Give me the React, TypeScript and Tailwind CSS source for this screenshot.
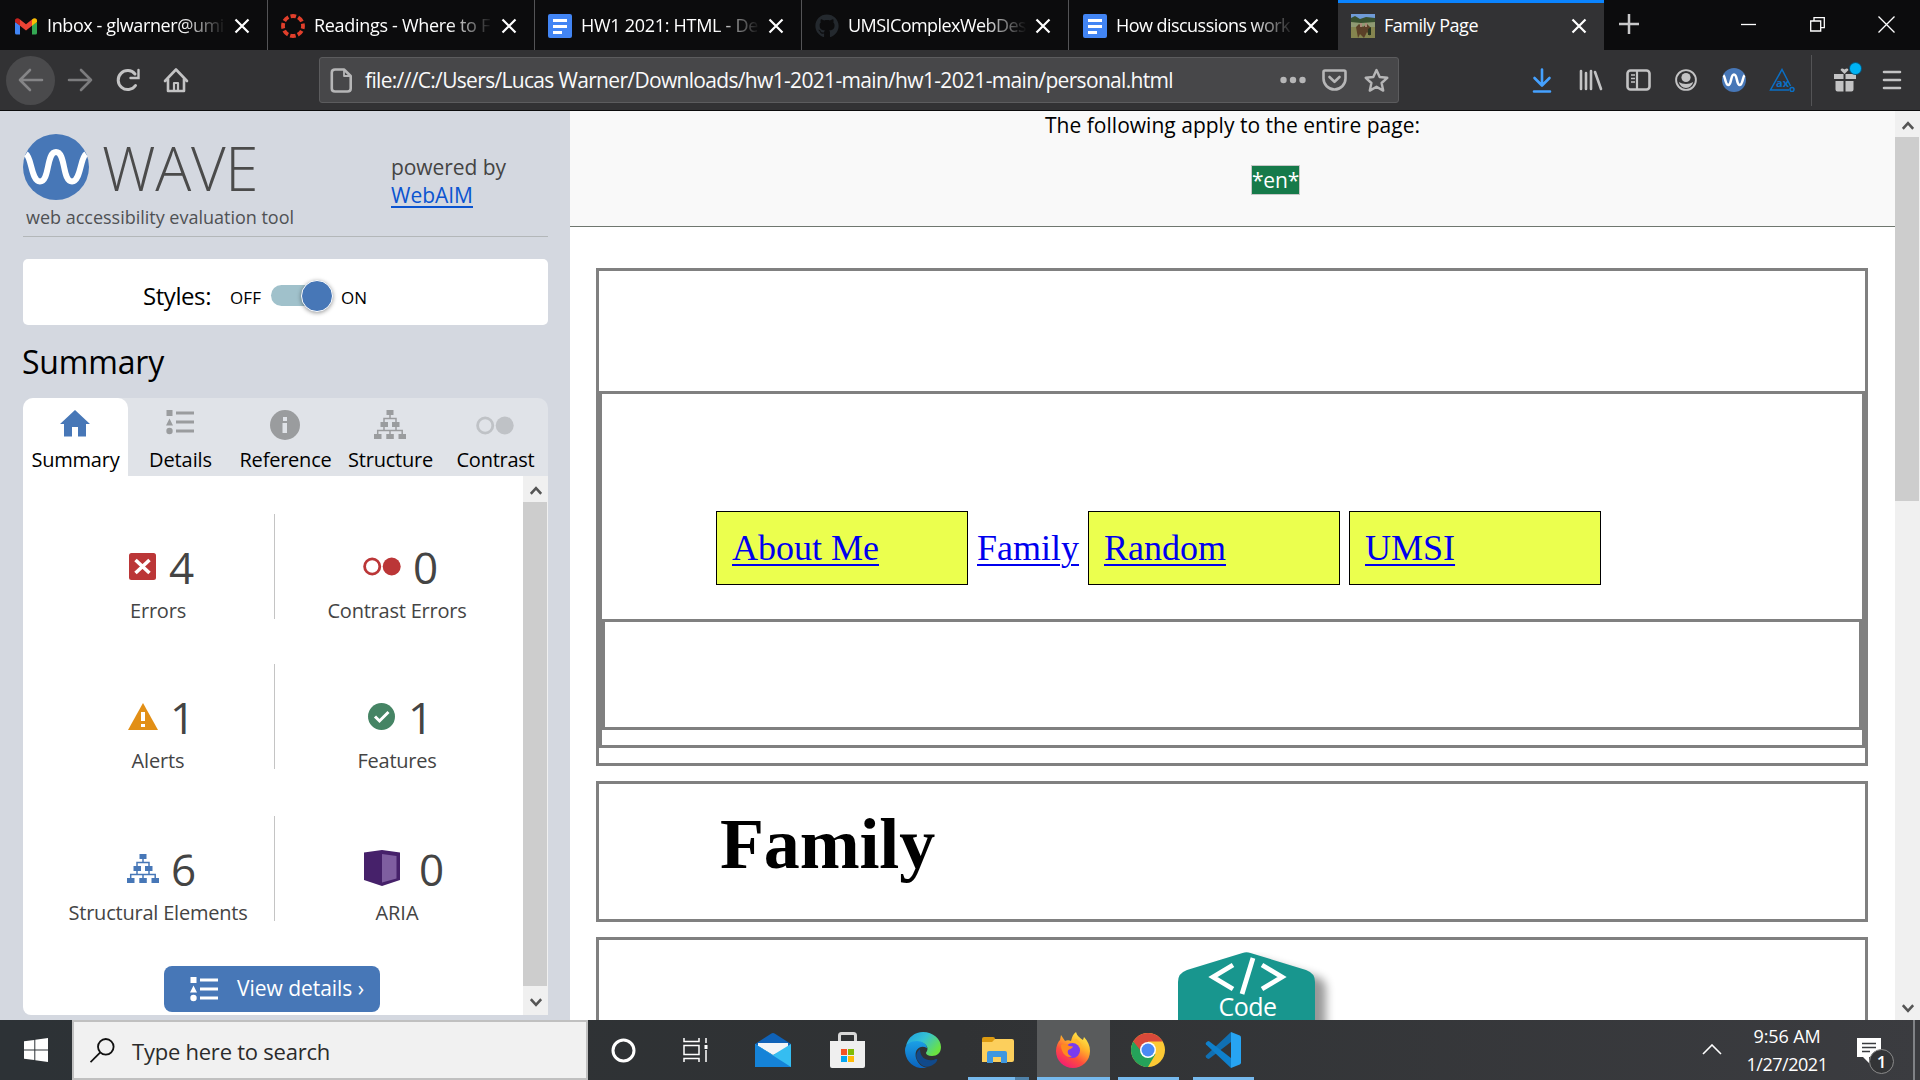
import { useLayoutEffect, useRef, useState } from "react";
import type { ReactNode } from "react";
import { FaGithub } from "react-icons/fa";

/** Text tracked so that it spans exactly `w` pixels. */
function Fit({ w, children, className = "" }: { w: number; children: string; className?: string }) {
  const ref = useRef<HTMLSpanElement>(null);
  const [spacing, setSpacing] = useState(0);
  useLayoutEffect(() => {
    if (ref.current) {
      const natural = ref.current.getBoundingClientRect().width;
      setSpacing((w - natural) / children.length);
    }
  }, [w, children]);
  return (
    <span ref={ref} className={`inline-block whitespace-pre ${className}`} style={{ letterSpacing: `${spacing}px` }}>
      {children}
    </span>
  );
}

const DocsIcon = () => (
  <svg width="24" height="24" viewBox="0 0 24 24">
    <rect width="24" height="24" rx="2" fill="#4285f4" />
    <path d="M5 5h14v3H5zM5 11h14v3H5zM5 17h9v3H5z" fill="#fff" />
  </svg>
);

const GmailIcon = () => (
  <svg width="24" height="24" viewBox="0 0 24 24">
    <path d="M1 8v11q0 1.500 1.500 1.500H6V11z" fill="#4285f4" />
    <path d="M23 8v11q0 1.500-1.500 1.500H18V11z" fill="#34a853" />
    <path d="M6 5.500l6 4.800 6-4.800v6.300L12 16.500 6 11.800z" fill="#ea4335" />
    <path d="M1 6.500C1 4 3.800 3.200 6 5.500v6.300L1 8z" fill="#c5221f" />
    <path d="M23 6.500C23 4 20.200 3.200 18 5.500v6.300L23 8z" fill="#fbbc04" />
  </svg>
);

const CanvasIcon = () => (
  <svg width="24" height="24" viewBox="0 0 24 24" fill="none">
    <circle cx="12" cy="12" r="10" stroke="#e13f2b" strokeWidth="3.800" strokeDasharray="5.600 2.254" strokeDashoffset="2.800" />
  </svg>
);

const PhotoIcon = () => (
  <svg width="24" height="24" viewBox="0 0 24 24">
    <rect width="24" height="24" fill="#85854f" />
    <rect width="24" height="5" fill="#6f9bd6" />
    <path d="M0 4l4-2 5 3 6-2 9 1v6H0z" fill="#38502f" />
    <path d="M0 8l10 1 14-1v5H0z" fill="#8f9a72" />
    <path d="M5 13l3-3 4 3 4-3 4 4-1 8-3-4-3 6-4-4-2 4z" fill="#5b4028" />
    <path d="M9 9h2v4H9zM14 9h2v4h-2z" fill="#a98a78" />
    <path d="M17 15l3-2v8h-3z" fill="#28351f" />
  </svg>
);

const CloseIcon = () => (
  <svg width="16" height="16" viewBox="0 0 16 16" stroke="#fff" strokeWidth="2.200">
    <path d="M1.500 1.500l13 13M14.500 1.500l-13 13" />
  </svg>
);

const tabs: { title: string; w: number; icon: ReactNode; active?: boolean }[] = [
  { title: "Inbox - glwarner@umi", w: 177, icon: <GmailIcon /> },
  { title: "Readings - Where to F", w: 176, icon: <CanvasIcon /> },
  { title: "HW1 2021: HTML - De", w: 177, icon: <DocsIcon /> },
  { title: "UMSIComplexWebDes", w: 178, icon: <FaGithub size={24} color="#24292e" /> },
  { title: "How discussions work", w: 174, icon: <DocsIcon /> },
  { title: "Family Page", w: 94, icon: <PhotoIcon />, active: true },
];

function TabStrip() {
  return (
    <div className="flex h-[50px] bg-[#0c0c0d] text-white">
      {tabs.map((t, i) => (
        <div
          key={t.title}
          className={
            t.active
              ? "flex w-[266px] border-t-[3px] border-[#0a84ff] bg-[#323234] pl-[13px]"
              : i === 4
                ? "flex w-[269px] pl-[14px]"
                : i === 0
                  ? "flex w-[268px] border-r border-[#545456] pl-[14px]"
                  : "flex w-[267px] border-r border-[#545456] pl-[13px]"
          }
        >
          <div className={t.active ? "mt-[11px] h-6 w-6" : "mt-[14px] h-6 w-6"}>{t.icon}</div>
          <div
            className={
              t.active
                ? "mt-2 ml-[9px] h-7 w-[179px] overflow-hidden text-[18px] leading-7"
                : "mt-[11px] ml-[9px] h-7 w-[179px] overflow-hidden text-[18px] leading-7 [mask-image:linear-gradient(to_right,#000_75%,transparent)]"
            }
          >
            <Fit w={t.w}>{t.title}</Fit>
          </div>
          <div className={t.active ? "mt-[15px] ml-2" : "mt-[18px] ml-2"}>
            <CloseIcon />
          </div>
        </div>
      ))}
      <svg className="mt-[13px] ml-[14px]" width="22" height="22" viewBox="0 0 22 22" stroke="#c8c8c9" strokeWidth="2.500">
        <path d="M11 1v20M1 11h20" />
      </svg>
      <div className="mr-[25px] ml-auto flex items-center gap-[53px] pb-0.5">
        <svg width="16" height="16" viewBox="0 0 16 16" stroke="#fff" strokeWidth="1.300">
          <path d="M0 8.500h15" />
        </svg>
        <svg width="15" height="15" viewBox="0 0 15 15" stroke="#fff" strokeWidth="1.300" fill="none">
          <path d="M.7 4h10v10H.7zM4 4V.7h10.300v10H11" />
        </svg>
        <svg width="17" height="17" viewBox="0 0 17 17" stroke="#fff" strokeWidth="1.300">
          <path d="M.5.5l16 16M16.500.5l-16 16" />
        </svg>
      </div>
    </div>
  );
}

function Toolbar() {
  return (
    <div className="flex h-[61px] items-center border-b border-[#0c0c0d] bg-[#323234] text-[#c3c3c4]">
      <div className="ml-[6px] flex h-[49px] w-[49px] items-center justify-center rounded-full bg-[#4a4a4c]">
        <svg width="26" height="24" viewBox="0 0 26 24" fill="none" stroke="#858587" strokeWidth="2.600" strokeLinecap="round" strokeLinejoin="round">
          <path d="M24 12H2M12 2L2 12l10 10" />
        </svg>
      </div>
      <svg className="ml-3" width="26" height="24" viewBox="0 0 26 24" fill="none" stroke="#7c7c7e" strokeWidth="2.600" strokeLinecap="round" strokeLinejoin="round">
        <path d="M2 12h22M14 2l10 10-10 10" />
      </svg>
      <svg className="ml-[23px]" width="24" height="24" viewBox="0 0 24 24" fill="none" stroke="currentColor" strokeWidth="3" strokeLinecap="round">
        <path d="M19.500 17.500A9.500 9.500 0 1 1 19 6" />
        <path d="M22.500 2v8h-8" strokeWidth="2.400" />
      </svg>
      <svg className="ml-[23px]" width="26" height="26" viewBox="0 0 26 26" fill="none" stroke="currentColor" strokeWidth="2.600" strokeLinejoin="round" strokeLinecap="round">
        <path d="M2 14L13 2.500 24 14M5 12v12h16V12" />
        <path d="M11 24v-8h4v8" strokeWidth="2.200" />
      </svg>
      <div className="ml-[130px] flex h-[46px] w-[1080px] items-center rounded-[3px] border border-[#5c5c5e] bg-[#474749] text-[#b6b6b7]">
        <svg className="ml-[10px]" width="23" height="25" viewBox="0 0 23 25" fill="none" stroke="currentColor" strokeWidth="2.600" strokeLinejoin="round">
          <path d="M14 1.500H5Q1.800 1.500 1.800 4.500v16q0 3 3.200 3h12.500q3.200 0 3.200-3V8z" />
          <path d="M14 1.500V8h6.500" strokeWidth="1.800" />
        </svg>
        <div className="ml-[12px] pb-px text-[21px] leading-8 text-[#f9f9fa]">
          <Fit w={808}>file:///C:/Users/Lucas Warner/Downloads/hw1-2021-main/hw1-2021-main/personal.html</Fit>
        </div>
        <svg className="ml-[107px]" width="26" height="8" fill="currentColor">
          <circle cx="3.500" cy="4" r="3.200" />
          <circle cx="13" cy="4" r="3.200" />
          <circle cx="22.500" cy="4" r="3.200" />
        </svg>
        <svg className="ml-[16px]" width="25" height="22" viewBox="0 0 25 22" fill="none" stroke="currentColor" strokeWidth="2.600" strokeLinecap="round" strokeLinejoin="round">
          <path d="M3 1.500h19q1.500 0 1.500 1.500v6.500a11 11 0 0 1-22 0V3Q1.500 1.500 3 1.500z" />
          <path d="M7.500 8l5 4.800 5-4.800" />
        </svg>
        <svg className="ml-[17px]" width="25" height="25" viewBox="0 0 25 25" fill="none" stroke="currentColor" strokeWidth="2.400" strokeLinejoin="round">
          <path d="M12.500 2l3.200 7 7.600.8-5.700 5.200 1.600 7.600-6.700-3.900-6.700 3.900 1.600-7.600L1.700 9.800l7.600-.8z" />
        </svg>
      </div>
      <svg className="ml-[133px]" width="20" height="25" viewBox="0 0 20 25" fill="none" stroke="#45a1ff" strokeWidth="2.600" strokeLinecap="round" strokeLinejoin="round">
        <path d="M10 1.500V17M2.500 10l7.500 7.500 7.500-7.500M2 23.500h16" />
      </svg>
      <svg className="ml-[27px]" width="24" height="22" viewBox="0 0 24 22" fill="none" stroke="currentColor" strokeWidth="2.600" strokeLinecap="round">
        <path d="M2 2v18M7 4v16M12 2v18M16 3l6 17" />
      </svg>
      <svg className="ml-[23px]" width="25" height="22" viewBox="0 0 25 22" fill="none" stroke="currentColor" strokeWidth="2.600">
        <rect x="1.500" y="1.500" width="22" height="19" rx="3" />
        <path d="M11 2v18" strokeWidth="2.200" />
        <path d="M5 6h4M5 9.500h4M5 13h4" strokeWidth="1.600" />
      </svg>
      <svg className="ml-[24px]" width="22" height="22" viewBox="0 0 22 22">
        <circle cx="11" cy="11" r="9.900" fill="none" stroke="currentColor" strokeWidth="1.900" />
        <circle cx="11" cy="8.500" r="4.600" fill="currentColor" />
        <path d="M3.800 13q3 2 7.200 2t7.200-2q-1.500 5.500-7.200 6-5.700-.5-7.200-6z" fill="currentColor" />
      </svg>
      <svg className="ml-[25px]" width="24" height="24" viewBox="0 0 66 66">
        <circle cx="33" cy="33" r="33" fill="#4777b7" />
        <path d="M4 20C9 24 9 46 17 47c10 0 6-29 16-29s6 29 16 29c8-1 8-23 13-27" fill="none" stroke="#fff" strokeWidth="7" />
      </svg>
      <svg className="ml-[23px] text-[11px] font-bold" width="26" height="24" viewBox="0 0 26 24" fill="none" stroke="#0b6fc4" strokeWidth="1.500">
        <path d="M20 22H1.500L13 1.500 21.500 18" />
        <circle cx="23" cy="21.500" r="2" />
        <text x="7" y="19" fill="#0b6fc4" stroke="none">ax</text>
      </svg>
      <div className="ml-[16px] h-[51px] w-px bg-[#545456]" />
      <div className="relative ml-[21px] h-6 w-6">
        <svg width="24" height="24" viewBox="0 0 24 24" fill="currentColor">
          <path d="M1 6h9.500v5H1zM12.500 6H23v5H12.500zM2.500 13h8v10.500h-6q-2 0-2-2zM12.500 13h8v8.500q0 2-2 2h-6zM11.500 6L7.500 2q1-2.500 4-.5 3-2 4 .5z" />
        </svg>
        <div className="absolute -top-[5px] left-[17px] h-[11px] w-[11px] rounded-full bg-[#00b3f4] ring-1 ring-[#075a80]" />
      </div>
      <svg className="ml-[25px]" width="20" height="20" viewBox="0 0 20 20" stroke="currentColor" strokeWidth="2.600" strokeLinecap="round">
        <path d="M2 2h16M2 10h16M2 18h16" />
      </svg>
    </div>
  );
}

const ListIcon = ({ color }: { color: string }) => (
  <svg width="28" height="25" viewBox="0 0 28 25" fill={color}>
    <path d="M.5 0h6v6h-6zM3.500 8.500l3.500 7H0zM10 1.500h18v3H10zM10 10.500h18v3H10zM10 19.500h18v3H10z" />
    <circle cx="3.500" cy="21" r="3.200" />
  </svg>
);

const TreeIcon = ({ color }: { color: string }) => (
  <svg width="32" height="29" viewBox="0 0 32 29">
    <path d="M12.500 0h7v5h-7zM6.500 12h7.500v5H6.500zM18 12h7.500v5H18zM0 24h7.500v5H0zM12.300 24h7.500v5h-7.500zM24.500 24H32v5h-7.500z" fill={color} />
    <path d="M16 5v3.500M10 12V8.500h12V12M10 17v3.500M22 17v3.500M3.700 24v-3.500h24.500V24M16 20.500V24" fill="none" stroke={color} strokeWidth="1.500" />
  </svg>
);

const ContrastIcon = ({ color }: { color: string }) => (
  <svg width="38" height="19" viewBox="0 0 38 19">
    <circle cx="9.200" cy="9.500" r="7.600" fill="none" stroke={color} strokeWidth="2.800" />
    <circle cx="28.700" cy="9.500" r="9" fill={color} />
  </svg>
);

const sideTabs: { label: string; w: number; icon: ReactNode }[] = [
  {
    label: "Summary",
    w: 88,
    icon: (
      <svg width="30" height="27" viewBox="0 0 30 27" fill="#4777b7">
        <path d="M15 0l15 14h-4v12.500h-8V17h-6v9.500H4V14H0z" />
      </svg>
    ),
  },
  { label: "Details", w: 63, icon: <ListIcon color="#9a9c9e" /> },
  {
    label: "Reference",
    w: 92,
    icon: (
      <svg width="30" height="30" viewBox="0 0 30 30">
        <circle cx="15" cy="15" r="15" fill="#9a9c9e" />
        <path d="M13 7h4v4h-4zM12.500 13H17v10h-4.500z" fill="#e0e3e8" />
      </svg>
    ),
  },
  { label: "Structure", w: 85, icon: <TreeIcon color="#9a9c9e" /> },
  {
    label: "Contrast",
    w: 78,
    icon: (
      <div className="pt-[6px]">
        <ContrastIcon color="#bfc2c6" />
      </div>
    ),
  },
];

const stats: { pad: string; gap: string; icon: ReactNode; n: string; label: string; w: number }[][] = [
  [
    {
      pad: "pl-[106px]",
      gap: "gap-[13px]",
      icon: (
        <svg width="27" height="27" viewBox="0 0 27 27">
          <rect width="27" height="27" rx="2.500" fill="#bb3637" />
          <path d="M6.500 7l14 13M20.500 7l-14 13" stroke="#fff" strokeWidth="3.600" />
        </svg>
      ),
      n: "4",
      label: "Errors",
      w: 56,
    },
    { pad: "pl-[88px]", gap: "gap-3", icon: <ContrastIcon color="#bb3637" />, n: "0", label: "Contrast Errors", w: 139 },
  ],
  [
    {
      pad: "pl-[105px]",
      gap: "gap-[12px]",
      icon: (
        <svg width="30" height="27" viewBox="0 0 30 27">
          <path d="M15 0l15 27H0z" fill="#e28f16" />
          <path d="M13 9h4v9h-4zM13 21h4v3h-4z" fill="#fff" />
        </svg>
      ),
      n: "1",
      label: "Alerts",
      w: 53,
    },
    {
      pad: "pl-[93px]",
      gap: "gap-[13px]",
      icon: (
        <svg width="27" height="27" viewBox="0 0 27 27">
          <circle cx="13.500" cy="13.500" r="13.500" fill="#458464" />
          <path d="M7 13.500l4.500 4.500 9-9" fill="none" stroke="#fff" strokeWidth="3" />
        </svg>
      ),
      n: "1",
      label: "Features",
      w: 79,
    },
  ],
  [
    { pad: "pl-[104px]", gap: "gap-3", icon: <TreeIcon color="#4777b7" />, n: "6", label: "Structural Elements", w: 179 },
    {
      pad: "pl-[89px]",
      gap: "gap-[19px]",
      icon: (
        <svg width="36" height="36" viewBox="0 0 36 36">
          <path d="M0 2.500L18 0l18 2.500v27.500L18 36 0 30z" fill="#46216a" />
          <path d="M18 4l14.500 2v22.500L18 32.500z" fill="#7f5ea0" />
        </svg>
      ),
      n: "0",
      label: "ARIA",
      w: 43,
    },
  ],
];

const Chevron = ({ down = false }: { down?: boolean }) => (
  <svg className={down ? "rotate-180" : ""} width="12" height="9" viewBox="0 0 12 9" fill="none" stroke="#555" strokeWidth="2.600">
    <path d="M.8 7.800L6 2.200l5.200 5.600" />
  </svg>
);

function Sidebar() {
  return (
    <div className="flex w-[570px] flex-col bg-[#d4d8e0] px-[23px] pr-[22px] pt-[23px]">
      <div className="flex h-[103px] justify-between border-b border-[#b3b7b9]">
        <div>
          <div className="flex h-[66px]">
            <svg width="66" height="66" viewBox="0 0 66 66">
              <circle cx="33" cy="33" r="33" fill="#4777b7" />
              <path d="M3 20C9 24 8 47 17 47.500c10 0 6-29.500 16-29.500s6 29.500 16 29.500c9-.5 8-23.500 14-27.500" fill="none" stroke="#fff" strokeWidth="6" />
            </svg>
            <div className="mt-px ml-[13px] text-[60px] leading-[66px] font-light text-[#4b4b4b]">
              <Fit w={156}>WAVE</Fit>
            </div>
          </div>
          <div className="mt-[5px] ml-[3px] text-[18px] leading-6 text-[#4f5154]">
            <Fit w={268}>web accessibility evaluation tool</Fit>
          </div>
        </div>
        <div className="mr-[41px] flex w-[116px] flex-col items-start pt-[19px] text-[21px] leading-7 text-[#444]">
          <Fit w={115}>powered by</Fit>
          <Fit w={82} className="text-[#0b54d0] underline decoration-2 underline-offset-3">
            WebAIM
          </Fit>
        </div>
      </div>
      <div className="mt-[22px] flex h-[66px] items-center rounded-[5px] bg-white pt-[7px] pl-[120px] text-[17px] text-black">
        <Fit w={68} className="text-[24px]">
          Styles:
        </Fit>
        <Fit w={31} className="ml-[19px] pt-1">
          OFF
        </Fit>
        <div className="relative ml-[10px] h-[21px] w-[60px] rounded-full bg-[#a0c1cb]">
          <div className="absolute -top-[5px] left-[30px] h-[32px] w-[32px] rounded-full border border-white bg-[#4777b7] shadow-[0_1px_4px_rgba(0,0,0,0.4)]" />
        </div>
        <Fit w={26} className="ml-[10px] pt-1">
          ON
        </Fit>
      </div>
      <div className="mt-[17px] -ml-px text-[32px] leading-10 text-black">
        <Fit w={142}>Summary</Fit>
      </div>
      <div className="mt-4 flex h-[78px] rounded-t-[10px] bg-[#e0e3e8] text-[20px] leading-6 text-black">
        {sideTabs.map((t, i) => (
          <div
            key={t.label}
            className={
              i === 0
                ? "flex flex-1 flex-col items-center rounded-t-[10px] bg-white pt-3"
                : "flex flex-1 flex-col items-center pt-3"
            }
          >
            <div className="mb-2 h-[30px] pr-0.5">{t.icon}</div>
            <Fit w={t.w}>{t.label}</Fit>
          </div>
        ))}
      </div>
      <div className="flex h-[539px] overflow-hidden rounded-bl-[8px] bg-white text-[#444]">
        <div className="w-[500px] pt-[38px]">
          {stats.map((row, i) => (
            <div key={i} className={i === 0 ? "flex h-[105px]" : i === 1 ? "mt-[45px] flex h-[105px]" : "mt-[47px] flex h-[105px]"}>
              {row.map((s, j) => (
                <div key={s.label} className={j === 0 ? "w-[252px] border-r border-[#c4c4c4] pt-8" : "w-[248px] pt-8"}>
                  <div className={`flex h-10 items-center ${s.pad} ${s.gap}`}>
                    {s.icon}
                    <span className="pt-0.5 text-[44px] leading-10">{s.n}</span>
                  </div>
                  <div className={j === 0 ? "mt-[13px] pl-[19px] text-center text-[20px] leading-6" : "mt-[13px] pr-[4px] text-center text-[20px] leading-6"}>
                    <Fit w={s.w}>{s.label}</Fit>
                  </div>
                </div>
              ))}
            </div>
          ))}
          <div className="mt-[45px] ml-[141px] flex h-[46px] w-[216px] items-center rounded-[8px] bg-[#4777b7] pl-[26px] text-[21px] text-white">
            <ListIcon color="#fff" />
            <Fit w={127} className="ml-[19px]">
              View details ›
            </Fit>
          </div>
        </div>
        <div className="flex w-[25px] flex-col bg-[#f0f0f0]">
          <div className="flex h-[28px] shrink-0 items-center justify-center">
            <Chevron />
          </div>
          <div className="-mt-0.5 mr-px h-[484px] shrink-0 bg-[#cdcdcd]" />
          <div className="flex flex-1 items-center justify-center pt-1">
            <Chevron down />
          </div>
        </div>
      </div>
    </div>
  );
}

function PageView() {
  const cell = "h-[74px] w-[252px] border border-black bg-[#ebff4e] pl-[15px] pt-[14px]";
  const link = "text-[#0000ee] underline decoration-2 underline-offset-4";
  return (
    <div className="flex w-[1325px] flex-col overflow-hidden bg-white">
      <div className="flex h-[116px] shrink-0 flex-col border-b border-[#6f776f] bg-[#f9f9f9] text-[21px] text-black">
        <div className="h-7 pl-[475px] leading-7">
          <Fit w={375}>The following apply to the entire page:</Fit>
        </div>
        <div className="mt-[26px] ml-[681px] flex h-[30px] w-[49px] items-center justify-center border border-[#c8c8c8] bg-[#167a4a] pt-0.5 text-white">
          <Fit w={47}>*en*</Fit>
        </div>
      </div>
      <div className="mt-[41px] mr-[27px] ml-[26px] flex shrink-0 flex-col gap-[15px] font-['Liberation_Serif',serif]">
        <div className="h-[498px] border-[3px] border-[#808080] pt-[120px]">
          <div className="h-[357px] border-[3px] border-[#808080] pt-[117px]">
            <div className="ml-[114px] flex h-[108px] text-[36px] leading-[44px]">
              <div className={cell}>
                <span className={link}>About Me</span>
              </div>
              <div className="w-[120px] pt-[15px] pl-[9px]">
                <span className={link}>Family</span>
              </div>
              <div className={cell}>
                <span className={link}>Random</span>
              </div>
              <div className="w-[9px]" />
              <div className={cell}>
                <span className={link}>UMSI</span>
              </div>
            </div>
            <div className="h-[111px] border-[3px] border-[#808080]" />
          </div>
        </div>
        <div className="h-[141px] border-[3px] border-[#808080] pt-[20px] pl-[121px] text-[72px] leading-[80px] font-bold text-black">
          <Fit w={215}>Family</Fit>
        </div>
        <div className="flex h-[180px] justify-center border-[3px] border-[#808080] pt-3">
          <div className="relative ml-[51px] h-[150px] w-[160px]">
            <svg className="absolute inset-0" width="160" height="150" viewBox="0 0 160 150">
              <defs>
                <filter id="soft" x="-20%" y="-20%" width="150%" height="140%">
                  <feGaussianBlur stdDeviation="5" />
                </filter>
              </defs>
              <path d="M12 26L73 8q4-1 8 0l61 18q6 3 6 12v112H12z" fill="#000" opacity=".4" filter="url(#soft)" />
              <path d="M0 30q0-9 9-12L64.500 1q4-1.500 8 0L128 18q9 3 9 12v120H0z" fill="#18968e" />
              <path d="M55 13L35 25l20 12M84 13l20 12-20 12M75 6L64 42" fill="none" stroke="#fff" strokeWidth="4.800" />
            </svg>
            <div className="absolute top-[40px] left-[41px] h-7 font-['Open_Sans',sans-serif] text-[25px] leading-7 text-white">
              <Fit w={58}>Code</Fit>
            </div>
          </div>
        </div>
      </div>
    </div>
  );
}

const EdgeIcon = () => (
  <svg width="36" height="36" viewBox="0 0 36 36">
    <defs>
      <linearGradient id="eg" x1="0" y1="0" x2="1" y2=".6">
        <stop offset="0" stopColor="#1c9de0" />
        <stop offset=".5" stopColor="#35c1d4" />
        <stop offset="1" stopColor="#6be340" />
      </linearGradient>
      <linearGradient id="eb" x1="0" y1="0" x2="0" y2="1">
        <stop offset="0" stopColor="#1ba0e6" />
        <stop offset="1" stopColor="#0a62bd" />
      </linearGradient>
    </defs>
    <path d="M1 14C3 5 10 0 18 0c10 0 18 7 18 15 0 6-4 9-9 9-4 0-6-1.500-6-3 0-1 1.500-2 1.500-4C22.500 13 18 10 13 10 7 10 3 12 1 14z" fill="url(#eg)" />
    <path d="M0 18c0-6 6-9 12-9 5 0 10 3 10 7-8-4-13 3-11 10 2 6 6 9 11 10C9 38 0 29 0 18z" fill="url(#eb)" />
    <path d="M15 17c-4 3-5 8-2 12 4 5 12 6 18 0 1-1 1-2 0-2-6 3-16 1-16-10z" fill="#114a8b" />
    <path d="M13 28c3 7 10 9 16 4 2-1 4-4 3-5-6 3-14 3-19 1z" fill="#114a8b" />
  </svg>
);

const FirefoxIcon = () => (
  <svg width="36" height="36" viewBox="0 0 36 36">
    <defs>
      <linearGradient id="ff" x1=".8" y1="0" x2=".2" y2="1">
        <stop offset="0" stopColor="#fff44f" />
        <stop offset=".35" stopColor="#ffb02a" />
        <stop offset=".65" stopColor="#ff4f3c" />
        <stop offset="1" stopColor="#f0147d" />
      </linearGradient>
    </defs>
    <path d="M21 0c1 4 4 6 7 8l1-3c4 4 6 9 6 14 0 10-8 17-17 17S1 29 1 19C1 14 3 10 5 8l1-5 4 6c2-1 4-1 6 0 1-4 2-7 5-9z" fill="url(#ff)" />
    <circle cx="17.500" cy="18.500" r="7.500" fill="#7a3bf0" />
    <path d="M17 10c5-1 10 3 9 9 2-6-1-10-5-12z" fill="#ffb52e" />
    <path d="M6 13c3-2 6-1 8 1l4 .5c-1 3-4 2-5 4-1 3 1 5 4 6-6 2-11-4-11-11.500z" fill="#ff8a1f" />
  </svg>
);

const ChromeIcon = () => (
  <svg width="34" height="34" viewBox="0 0 34 34">
    <circle cx="17" cy="17" r="17" fill="#fcc934" />
    <path d="M17 17L2.300 8.500A17 17 0 0 0 17 34l7.400-12.800z" fill="#25a25a" />
    <path d="M17 17H9.200L2.300 8.500A17 17 0 0 1 31.700 8.500H17z" fill="#d9493a" />
    <circle cx="17" cy="17" r="8" fill="#fff" />
    <circle cx="17" cy="17" r="6.500" fill="#4a8af4" />
  </svg>
);

function Taskbar() {
  return (
    <div className="flex h-[60px] bg-linear-to-r from-[#2d3236] via-[#303234] to-[#3b3c40]">
      <div className="flex w-[72px] items-center justify-center">
        <svg width="24" height="24" viewBox="0 0 24 24" fill="#fff">
          <path d="M0 3.300L10.300 2v9.500H0zM11.300 1.800L24 0v11.500H11.300zM0 12.500h10.300V22L0 20.700zM11.300 12.500H24V24l-12.700-1.800z" />
        </svg>
      </div>
      <div className="flex w-[516px] border-2 border-[#c0c0c0] bg-[#f1f1f1]">
        <svg className="mt-4 ml-4" width="25" height="25" viewBox="0 0 25 25" fill="none" stroke="#111" strokeWidth="1.800">
          <circle cx="15.800" cy="8.800" r="7.800" />
          <path d="M10.300 14.300L.5 24.200" />
        </svg>
        <div className="mt-[13px] ml-[17px] text-[22px] leading-8 text-[#2b2b2b]">
          <Fit w={198}>Type here to search</Fit>
        </div>
      </div>
      <div className="flex items-center">
        <svg className="ml-[23px]" width="25" height="25" viewBox="0 0 25 25" fill="none" stroke="#fff" strokeWidth="3">
          <circle cx="12.500" cy="12.500" r="10.500" />
        </svg>
        <svg className="ml-[47px]" width="26" height="24" viewBox="0 0 26 24" fill="none" stroke="#fff" strokeWidth="1.500">
          <path d="M1 0v3.500h15V0M1 24v-3.500h15V24M1 7.500h15v9H1zM23 0v5M23 12v12" />
          <path d="M21.500 7h3v4h-3z" fill="#fff" stroke="none" />
        </svg>
        <svg className="ml-[46px]" width="36" height="34" viewBox="0 0 36 34">
          <path d="M0 11L16 .7q2-1.200 4 0L36 11v6H0z" fill="#0f62b8" />
          <path d="M3 10h30v6L18 22 3 13z" fill="#f1f4f7" />
          <path d="M0 11l18 11L36 11v23H0z" fill="#35bdf1" />
          <path d="M0 11l36 23H0z" fill="#1583d8" />
          <path d="M3.500 10h29L18 21.500z" fill="#f1f4f7" />
        </svg>
        <svg className="ml-[39px]" width="35" height="36" viewBox="0 0 35 36">
          <path d="M9.500 12V3.500q0-2 2-2h12q2 0 2 2V12" fill="none" stroke="#d8d8d8" strokeWidth="3" />
          <path d="M0 9h35v25q0 2-2 2H2q-2 0-2-2z" fill="#efefef" />
          <path d="M11 17h6v6h-6z" fill="#f35325" />
          <path d="M18 17h6v6h-6z" fill="#81bc06" />
          <path d="M11 24h6v6h-6z" fill="#05a6f0" />
          <path d="M18 24h6v6h-6z" fill="#ffba08" />
        </svg>
        <div className="ml-[40px]">
          <EdgeIcon />
        </div>
        <div className="ml-[27px] flex h-[60px] w-[61px] flex-col items-center justify-between">
          <svg className="mt-[17px] mr-0.5" width="32" height="27" viewBox="0 0 32 27">
            <path d="M0 2q0-2 2-2h9q2 0 2 2v4H0z" fill="#dc9a10" />
            <path d="M0 5h10l3-3h17q2 0 2 2v19q0 2-2 2H0z" fill="#fccf5c" />
            <path d="M5 26V16q0-2 2-2h16q2 0 2 2v10h-6v-6h-8v6z" fill="#3f97e0" />
          </svg>
          <div className="flex h-[3px] w-full bg-[#4f81a8]">
            <div className="w-[47px] bg-[#76b9ed]" />
          </div>
        </div>
        <div className="ml-2 flex h-[60px] w-[73px] flex-col items-center justify-between bg-[#595b5c]">
          <div className="mt-3 mr-0.5">
            <FirefoxIcon />
          </div>
          <div className="h-[3px] w-full bg-[#76b9ed]" />
        </div>
        <div className="ml-2 flex h-[60px] w-[61px] flex-col items-center justify-between">
          <div className="mt-[13px] mr-0.5">
            <ChromeIcon />
          </div>
          <div className="h-[3px] w-full bg-[#76b9ed]" />
        </div>
        <div className="ml-[14px] flex h-[60px] w-[61px] flex-col items-center justify-between">
          <svg className="mt-3 mr-0.5" width="36" height="36" viewBox="0 0 36 36">
            <path d="M1 23.500L26 0v10L4.500 26.500q-1.200.8-2.200 0l-1.300-1.200q-.8-.9 0-1.800z" fill="#1070b3" />
            <path d="M1 12.500L26 36V26L4.500 9.500q-1.200-.8-2.200 0L1 10.700q-.8.900 0 1.800z" fill="#0f80cc" />
            <path d="M26 0l8.800 3.500Q36 4 36 5.500v25q0 1.500-1.200 2L26 36z" fill="#27a4f2" />
          </svg>
          <div className="h-[3px] w-full bg-[#76b9ed]" />
        </div>
      </div>
      <div className="ml-auto flex">
        <svg className="mt-6" width="20" height="11" viewBox="0 0 20 11" fill="none" stroke="#fff" strokeWidth="1.600">
          <path d="M1 10l9-9 9 9" />
        </svg>
        <div className="ml-[25px] flex w-[80px] flex-col items-center pt-0.5 text-[18px] leading-7 text-white">
          <Fit w={67}>9:56 AM</Fit>
          <Fit w={81}>1/27/2021</Fit>
        </div>
        <div className="relative mt-[18px] ml-[30px] h-9 w-[56px]">
          <svg width="24" height="26" viewBox="0 0 24 26">
            <path d="M0 0h24v19H12v6l-6-6H0z" fill="#fff" />
            <path d="M5 5.500h14M5 9.500h14M5 13.500h8" stroke="#3a3c40" strokeWidth="1.300" />
          </svg>
          <div className="absolute top-[11px] left-[12px] flex h-[25px] w-[25px] items-center justify-center rounded-full border border-[#8a8a8a] bg-[#333436] text-[17px] font-semibold text-white">
            1
          </div>
        </div>
        <div className="mr-[5px] w-0.5 bg-[#808286]" />
      </div>
    </div>
  );
}

export default function App() {
  return (
    <div className="flex h-[1080px] w-[1920px] flex-col overflow-hidden bg-white font-['Open_Sans',sans-serif]">
      <TabStrip />
      <Toolbar />
      <div className="flex h-[909px] overflow-hidden">
        <Sidebar />
        <PageView />
        <div className="flex w-[25px] flex-col bg-[#f0f0f0]">
          <div className="flex h-[28px] items-center justify-center">
            <Chevron />
          </div>
          <div className="-mt-0.5 mr-px h-[364px] bg-[#cdcdcd]" />
          <div className="mt-auto flex h-6 items-center justify-center">
            <Chevron down />
          </div>
        </div>
      </div>
      <Taskbar />
    </div>
  );
}
